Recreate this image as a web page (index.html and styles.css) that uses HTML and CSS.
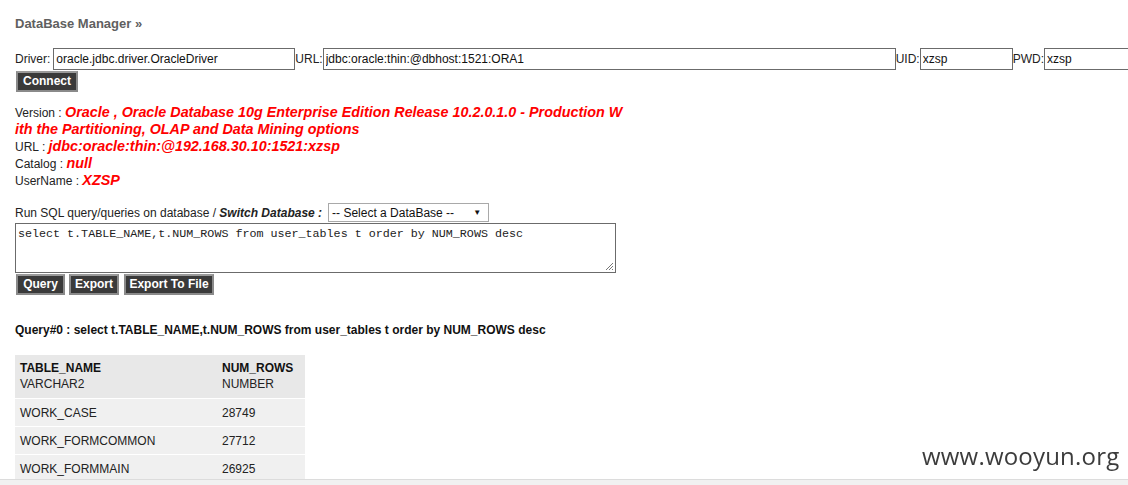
FILE: index.html
```
<!DOCTYPE html>
<html>
<head>
<meta charset="utf-8">
<title>DataBase Manager</title>
<link rel="stylesheet" href="styles.css">
</head>
<body>
<div class="page">
  <h2 class="title">DataBase Manager &raquo;</h2>

  <form class="conn">
    <div class="conn-row">
      <label class="lbl lbl-driver">Driver:</label><input class="inp inp-driver" type="text" value="oracle.jdbc.driver.OracleDriver"><label class="lbl">URL:</label><input class="inp inp-url" type="text" value="jdbc:oracle:thin:@dbhost:1521:ORA1"><label class="lbl">UID:</label><input class="inp inp-uid" type="text" value="xzsp"><label class="lbl">PWD:</label><input class="inp inp-pwd" type="text" value="xzsp">
    </div>
    <div class="btn-row">
      <button type="button" class="btn btn-connect">Connect</button>
    </div>
  </form>

  <div class="info">
    <div class="info-line">Version : <span class="val">Oracle , Oracle Database 10g Enterprise Edition Release 10.2.0.1.0 - Production With the Partitioning, OLAP and Data Mining options</span></div>
    <div class="info-line">URL : <span class="val">jdbc:oracle:thin:@192.168.30.10:1521:xzsp</span></div>
    <div class="info-line">Catalog : <span class="val">null</span></div>
    <div class="info-line">UserName : <span class="val">XZSP</span></div>
  </div>

  <div class="sql">
    <div class="sql-head">
      <span>Run SQL query/queries on database / <b><i>Switch Database :</i></b></span>
      <div class="select">
        <span class="select-text">-- Select a DataBase --</span>
        <span class="select-arrow">&#9660;</span>
      </div>
    </div>
    <div class="sql-area">
      <div class="textarea">select t.TABLE_NAME,t.NUM_ROWS from user_tables t order by NUM_ROWS desc</div>
      <svg class="grip" width="9" height="9" viewBox="0 0 9 9"><path d="M8 1L1 8M8 4L4 8M8 7L7 8" stroke="#777" stroke-width="1" fill="none"/></svg>
    </div>
    <div class="sql-btns">
      <button type="button" class="btn btn-query">Query</button>
      <button type="button" class="btn btn-export">Export</button>
      <button type="button" class="btn btn-file">Export To File</button>
    </div>
  </div>

  <div class="query-title">Query#0 : select t.TABLE_NAME,t.NUM_ROWS from user_tables t order by NUM_ROWS desc</div>

  <table class="result">
    <thead>
      <tr>
        <th class="c1"><b>TABLE_NAME</b><br>VARCHAR2</th>
        <th class="c2"><b>NUM_ROWS</b><br>NUMBER</th>
      </tr>
    </thead>
    <tbody>
      <tr><td>WORK_CASE</td><td>28749</td></tr>
      <tr><td>WORK_FORMCOMMON</td><td>27712</td></tr>
      <tr><td>WORK_FORMMAIN</td><td>26925</td></tr>
    </tbody>
  </table>
</div>

<div class="watermark">www.wooyun.org</div>
<div class="hscroll"></div>
</body>
</html>
```
FILE: styles.css
```
html, body {
  margin: 0;
  padding: 0;
  background: #fff;
}
body {
  font-family: "Liberation Sans", Arial, sans-serif;
  font-size: 12px;
  color: #222;
  overflow: hidden;
}
.page {
  padding: 16px 0 0 15px;
  width: 1200px;
}
.title {
  margin: 0;
  font-size: 13px;
  line-height: 16px;
  font-weight: bold;
  color: #606060;
}
.conn {
  margin: 16px 0 0 0;
}
.conn-row {
  display: flex;
  align-items: center;
  white-space: nowrap;
  height: 22px;
}
.lbl {
  line-height: 14px;
  color: #222;
}
.lbl-driver {
  margin-right: 3px;
}
.inp {
  box-sizing: border-box;
  height: 22px;
  border: 1px solid #6b6b6b;
  padding: 0 2px;
  margin: 0;
  font-family: "Liberation Sans", Arial, sans-serif;
  font-size: 12px;
  color: #111;
  background: #fff;
  outline: none;
}
.inp-driver { width: 242px; }
.inp-url { width: 573px; }
.inp-uid { width: 93px; }
.inp-pwd { width: 100px; }
.btn-row {
  margin-top: 1px;
}
.btn {
  box-sizing: border-box;
  height: 21px;
  margin: 0;
  padding: 0;
  background: #3a3a3a;
  color: #fff;
  border: 2px solid #8a8a8a;
  border-top-color: #9a9a9a;
  font-family: "Liberation Sans", Arial, sans-serif;
  font-size: 12px;
  font-weight: bold;
  line-height: 17px;
  white-space: nowrap;
  text-align: center;
  cursor: pointer;
}
.btn-connect { width: 62px; margin-left: 1px; }
.info {
  margin-top: 13px;
  width: 611px;
}
.info-line {
  line-height: 17px;
  color: #222;
  word-break: break-all;
}
.val {
  color: #f00;
  font-weight: bold;
  font-style: italic;
  font-size: 14.35px;
  line-height: 15px;
}
.sql {
  margin-top: 13px;
}
.sql-head {
  display: flex;
  align-items: center;
  height: 19px;
  gap: 6px;
}
.select {
  box-sizing: border-box;
  height: 19px;
  width: 161px;
  border: 1px solid #a9a9a9;
  display: flex;
  align-items: center;
  justify-content: space-between;
  padding: 0 7px 0 3px;
  font-size: 12px;
  color: #111;
}
.select-arrow {
  font-size: 8px;
  color: #111;
}
.sql-area {
  position: relative;
  margin-top: 1px;
  width: 601px;
  height: 50px;
  box-sizing: border-box;
  border: 1px solid #6b6b6b;
}
.textarea {
  padding: 3px 2px;
  font-family: "Liberation Mono", "Courier New", monospace;
  font-size: 11.7px;
  line-height: 14px;
  color: #222;
}
.grip {
  position: absolute;
  right: 1px;
  bottom: 1px;
}
.sql-btns {
  display: flex;
  gap: 4px;
  margin-top: 1px;
  margin-left: 1px;
}
.btn-query { width: 49px; }
.btn-export { width: 50px; }
.btn-file { width: 90px; margin-left: 1px; }
.query-title {
  margin-top: 28px;
  font-weight: bold;
  line-height: 14px;
  color: #111;
}
.result {
  margin-top: 18px;
  border-collapse: separate;
  border-spacing: 0;
  width: 290px;
  color: #222;
}
.result th {
  text-align: left;
  font-weight: normal;
  background: #e8e8e8;
  padding: 5px 5px 6px 5px;
  line-height: 16px;
  border-bottom: 1px solid #fff;
}
.result th b {
  color: #111;
}
.result .c1 { width: 192px; }
.result td {
  background: #f0f0f0;
  height: 27px;
  padding: 0 5px;
  line-height: 14px;
  border-bottom: 1px solid #fff;
}
.watermark {
  position: fixed;
  left: 922px;
  top: 440px;
  font-family: "Open Sans", "Noto Sans", sans-serif;
  font-size: 24px;
  line-height: 32px;
  color: #3c3c3c;
  letter-spacing: 0.2px;
}
.hscroll {
  position: fixed;
  left: 0;
  top: 479px;
  width: 1128px;
  height: 6px;
  background: #f1f1f1;
  border-top: 1px solid #dcdcdc;
}
```
